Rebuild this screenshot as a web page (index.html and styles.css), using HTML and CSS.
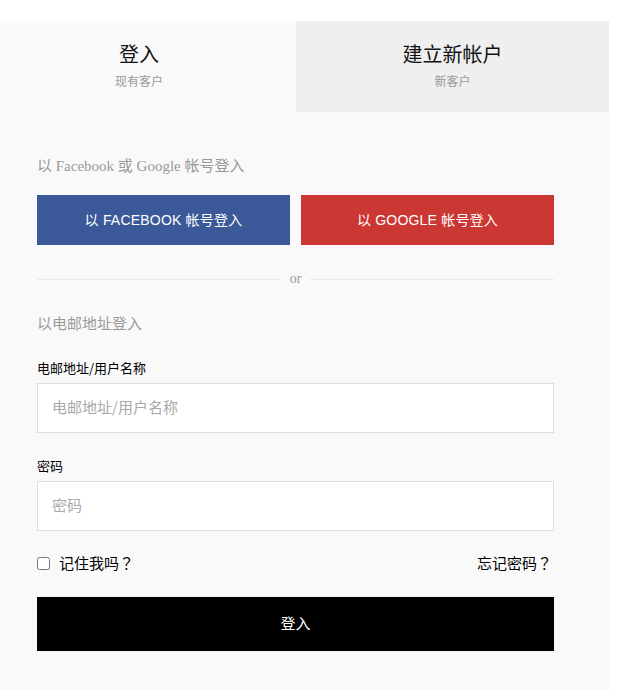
FILE: index.html
```html
<!DOCTYPE html>
<html lang="zh">
<head>
<meta charset="utf-8">
<title>登入</title>
<link rel="stylesheet" href="styles.css">
</head>
<body>
<div class="page">
  <div class="panel">
    <div class="tabs">
      <div class="tab tab-active">
        <div class="tab-title">登入</div>
        <div class="tab-sub">现有客户</div>
      </div>
      <div class="tab tab-other">
        <div class="tab-title">建立新帐户</div>
        <div class="tab-sub">新客户</div>
      </div>
    </div>
    <div class="content">
      <p class="intro">以 Facebook 或 Google 帐号登入</p>
      <div class="social">
        <a class="social-btn fb" href="#">以 FACEBOOK 帐号登入</a>
        <a class="social-btn gg" href="#">以 GOOGLE 帐号登入</a>
      </div>
      <div class="divider"><span class="divider-line"></span><span class="divider-text">or</span><span class="divider-line"></span></div>
      <p class="intro intro-email">以电邮地址登入</p>
      <form class="form">
        <label class="label" for="user">电邮地址/用户名称</label>
        <input class="field" id="user" type="text" placeholder="电邮地址/用户名称">
        <label class="label label-gap" for="pass">密码</label>
        <input class="field" id="pass" type="password" placeholder="密码">
        <div class="row">
          <label class="remember"><input class="check" type="checkbox"><span>记住我吗<span class="qm">？</span></span></label>
          <a class="forgot" href="#">忘记密码<span class="qm">？</span></a>
        </div>
        <button class="submit" type="button">登入</button>
      </form>
    </div>
  </div>
</div>
</body>
</html>
```
FILE: styles.css
```css
* { box-sizing: border-box; }
html, body { margin: 0; padding: 0; background: #fff; }
body {
  font-family: "Noto Sans CJK SC", "Liberation Sans", sans-serif;
  color: #000;
}
.page { padding-top: 21px; }
.panel {
  width: 609px;
  background: #f9f9f9;
  padding-bottom: 60px;
}
.tabs {
  display: grid;
  grid-template-columns: 296px 1fr;
  height: 91px;
}
.tab {
  text-align: center;
  padding-top: 19px;
}
.tab-active { background: #f9f9f9; padding-right: 18px; }
.tab-other { background: #efefef; }
.tab-title {
  font-size: 20px;
  line-height: 28px;
  color: #111;
}
.tab-sub {
  font-size: 12px;
  line-height: 16px;
  margin-top: 5px;
  color: #999;
}
.content { padding: 0 55px 0 37px; }
.intro {
  margin: 44px 0 0;
  font-family: "Liberation Serif", "Noto Sans CJK SC", serif;
  font-size: 15px;
  line-height: 20px;
  color: #999;
}
.intro-email {
  margin-top: 24px;
  font-family: "Noto Sans CJK SC", "Liberation Sans", sans-serif;
}
.social {
  display: grid;
  grid-template-columns: 253px 253px;
  justify-content: space-between;
  margin-top: 19px;
}
.social-btn {
  display: flex;
  align-items: center;
  justify-content: center;
  height: 50px;
  padding-bottom: 3px;
  color: #fff;
  text-decoration: none;
  font-family: "Liberation Sans", "Noto Sans CJK SC", sans-serif;
  font-size: 14px;
  letter-spacing: 0.2px;
}
.fb { background: #3b5998; }
.gg { background: #cb3732; }
.divider {
  display: flex;
  align-items: center;
  margin-top: 24px;
  height: 20px;
}
.divider-line {
  flex: 1;
  height: 1px;
  background: #e9e9e9;
}
.divider-text {
  padding: 0 9px;
  font-family: "Liberation Serif", serif;
  font-size: 14px;
  color: #999;
  line-height: 20px;
}
.form { display: flex; flex-direction: column; }
.label {
  margin-top: 26px;
  font-size: 13px;
  line-height: 18px;
  color: #000;
}
.label-gap { margin-top: 24px; }
.field {
  margin-top: 6px;
  height: 50px;
  border: 1px solid #ddd;
  background: #fff;
  padding: 0 14px 3px;
  font-family: "Noto Sans CJK SC", "Liberation Sans", sans-serif;
  font-size: 15px;
  color: #333;
  outline: none;
}
.field::placeholder { color: #a8a8a8; }
.row {
  display: flex;
  justify-content: space-between;
  align-items: center;
  margin-top: 21px;
  height: 20px;
  font-size: 15px;
  padding-right: 2px;
  text-spacing-trim: space-all;
}
.qm {
  font-family: "Noto Sans CJK JP", sans-serif;
  display: inline-block;
  width: 15px;
  text-align: center;
  text-spacing-trim: space-all;
}
.remember {
  display: flex;
  align-items: center;
  gap: 9px;
  color: #000;
}
.check {
  width: 13px;
  height: 13px;
  margin: 2px 0 0;
}
.forgot { color: #000; text-decoration: none; }
.submit {
  margin-top: 25px;
  height: 54px;
  padding: 0 0 3px;
  border: 0;
  background: #000;
  color: #fff;
  font-family: "Noto Sans CJK SC", "Liberation Sans", sans-serif;
  font-size: 15px;
  cursor: pointer;
}
```
